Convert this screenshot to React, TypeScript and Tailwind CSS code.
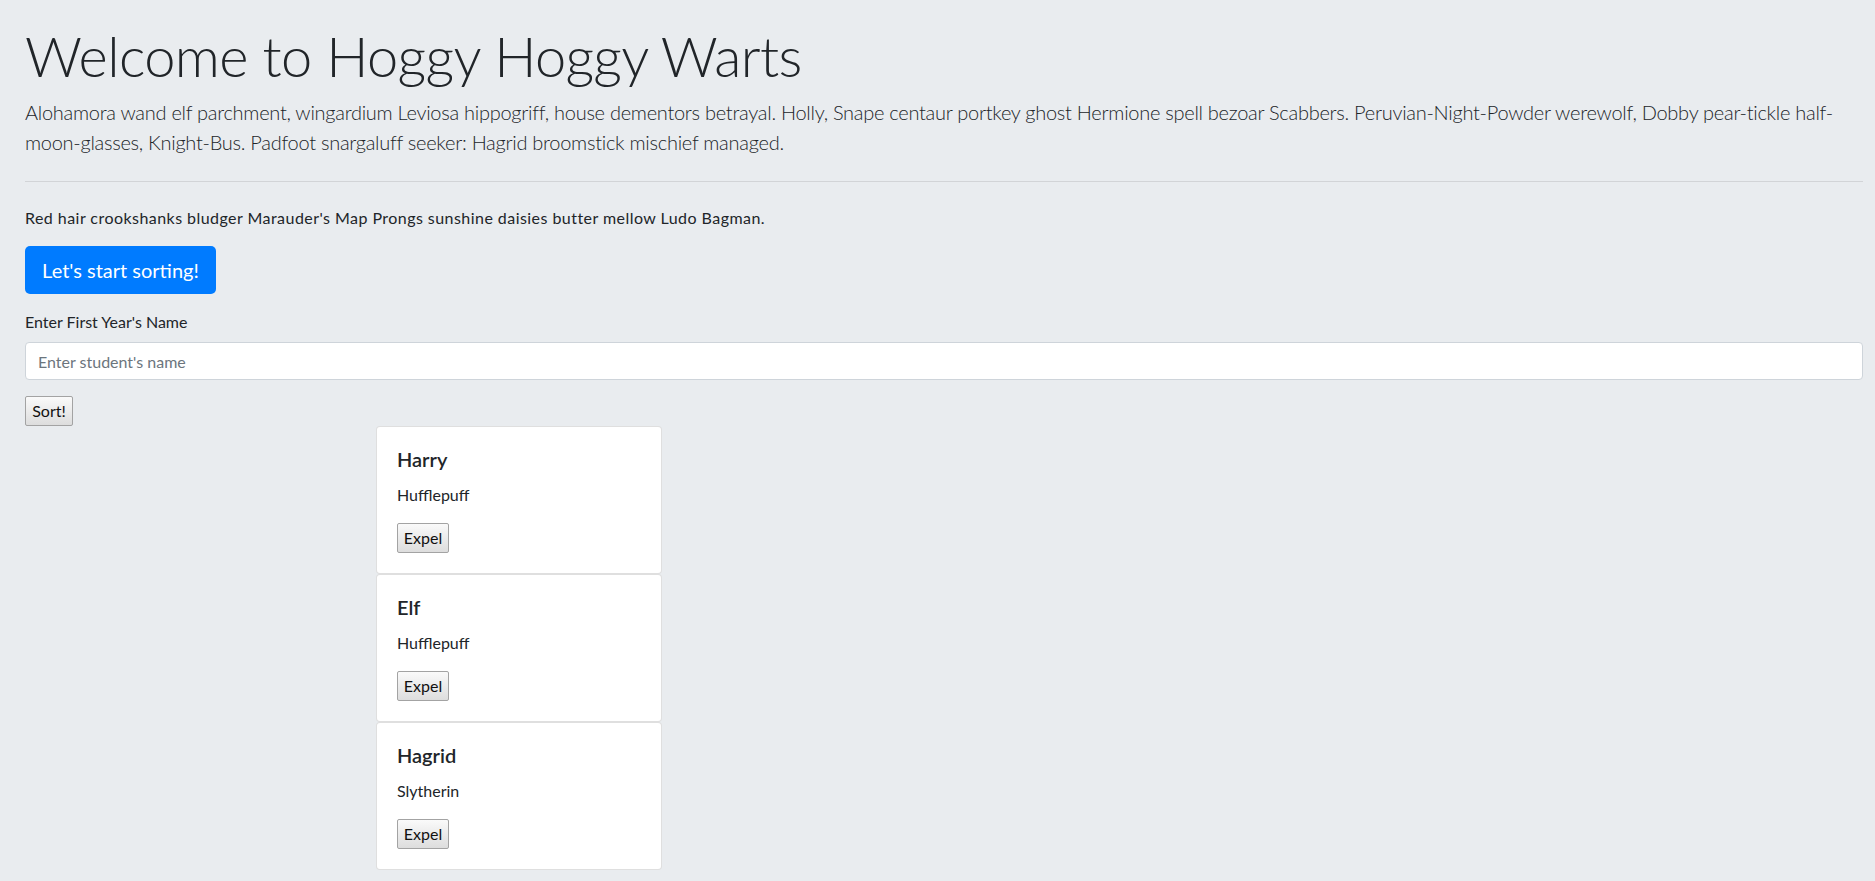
import { useState } from "react";

const initialStudents = [
  { name: "Harry", house: "Hufflepuff" },
  { name: "Elf", house: "Hufflepuff" },
  { name: "Hagrid", house: "Slytherin" },
];

const font = "font-['Lato','Liberation_Sans',sans-serif]";

const App = () => {
  const [students, setStudents] = useState(initialStudents);
  const [name, setName] = useState("");

  return (
    <div className={`min-h-screen bg-[#e9ecef] text-[#212529] ${font}`}>
      <div className="pl-[25px] pr-[12px] pt-[22px]">
        <h1 className="text-[56px] leading-[1.2] font-light tracking-[-0.6px] mb-2">Welcome to Hoggy Hoggy Warts</h1>
        <p className="text-[20px] leading-[30px] font-light tracking-[-0.27px]">
          <span className="block whitespace-nowrap">
            Alohamora wand elf parchment, wingardium Leviosa hippogriff, house dementors betrayal. Holly, Snape centaur
            portkey ghost Hermione spell bezoar Scabbers. Peruvian-Night-Powder werewolf, Dobby pear-tickle half-
          </span>
          <span className="block whitespace-nowrap">
            moon-glasses, Knight-Bus. Padfoot snargaluff seeker: Hagrid broomstick mischief managed.
          </span>
        </p>
        <hr className="my-6 border-0 border-t border-[#d2d4d7]" />
        <p className="text-base leading-6 tracking-[0.45px] mb-4">
          Red hair crookshanks bludger Marauder's Map Prongs sunshine daisies butter mellow Ludo Bagman.
        </p>
        <div className="mb-4">
          <button className="w-[191px] h-[48px] rounded-[5px] bg-[#007bff] text-white text-[20px] leading-[30px]">
            Let's start sorting!
          </button>
        </div>

        <div className="mb-4">
          <label className="block text-base leading-6 mb-2">Enter First Year's Name</label>
          <input
            value={name}
            onChange={(e) => setName(e.target.value)}
            placeholder="Enter student's name"
            className="block w-full h-[38px] px-3 bg-white border border-[#ced4da] rounded text-base text-[#495057] placeholder:text-[#6c757d] outline-none"
          />
        </div>
        <button
          onClick={() => {
            if (!name) return;
            setStudents([...students, { name, house: "Gryffindor" }]);
            setName("");
          }}
          className="w-[48px] h-[30px] text-base leading-6 font-normal text-[#111] border border-[#a3a3a3] rounded-[2px] bg-gradient-to-b from-[#fafafa] to-[#dddddd]"
        >
          Sort!
        </button>

        <div className="ml-[351px] w-[286px] flex flex-col">
          {students.map((s, i) => (
            <div key={i} className="bg-white border border-black/[0.125] rounded p-5">
              <h5 className="text-[20px] leading-6 font-semibold mb-3">{s.name}</h5>
              <p className="text-base leading-6 mb-4">{s.house}</p>
              <button
                onClick={() => setStudents(students.filter((_, j) => j !== i))}
                className="w-[52px] h-[30px] text-base leading-6 font-normal text-[#111] border border-[#a3a3a3] rounded-[2px] bg-gradient-to-b from-[#fafafa] to-[#dddddd]"
              >
                Expel
              </button>
            </div>
          ))}
        </div>
      </div>
    </div>
  );
};

export default App;
